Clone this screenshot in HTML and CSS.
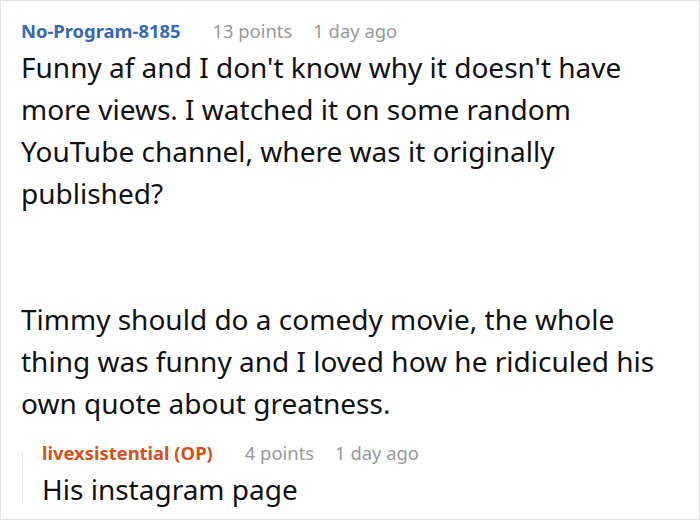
FILE: index.html
```html
<!DOCTYPE html>
<html>
<head>
<meta charset="utf-8">
<link rel="stylesheet" href="styles.css">
</head>
<body>
<div class="frame">
  <div class="comment">
    <div class="meta">
      <span class="user user-blue">No-Program-8185</span>
      <span class="info">13 points</span>
      <span class="info">1 day ago</span>
    </div>
    <p class="text">Funny af and I don't know why it doesn't have more views. I watched it on some random YouTube channel, where was it originally published?</p>
    <p class="text text-gap">Timmy should do a comedy movie, the whole thing was funny and I loved how he ridiculed his own quote about greatness.</p>
    <div class="reply">
      <div class="meta">
        <span class="user user-orange">livexsistential (OP)</span>
        <span class="info">4 points</span>
        <span class="info">1 day ago</span>
      </div>
      <p class="reply-text">His instagram page</p>
    </div>
  </div>
</div>
</body>
</html>
```
FILE: styles.css
```css
html, body {
  margin: 0;
  padding: 0;
  background: #fff;
}
.frame {
  width: 700px;
  height: 520px;
  box-sizing: border-box;
  border: 1px solid #e2e2e2;
  overflow: hidden;
  font-family: "Noto Sans", "Open Sans", sans-serif;
  color: #111;
}
.comment {
  padding: 15px 38px 0 20px;
}
.meta {
  display: flex;
  gap: 21px;
  font-size: 18.4px;
  line-height: 30px;
}
.user {
  font-weight: bold;
  margin-right: 11px;
}
.user-blue {
  color: #3767b5;
}
.user-orange {
  color: #d5501d;
}
.info {
  color: #999;
}
.text {
  margin: 0;
  font-size: 28px;
  line-height: 42px;
}
.text-gap {
  margin-top: 84px;
}
.reply {
  position: relative;
  margin-top: 14px;
  padding-left: 21px;
}
.reply::before {
  content: "";
  position: absolute;
  left: 1px;
  top: 14px;
  bottom: 8px;
  width: 1px;
  background: #e3e3e3;
}
.reply-text {
  margin: 1px 0 0;
  font-size: 28px;
  line-height: 40px;
}
```
